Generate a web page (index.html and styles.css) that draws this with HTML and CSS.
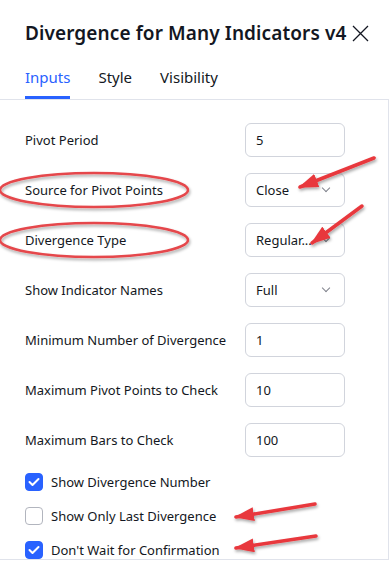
FILE: index.html
```html
<!DOCTYPE html>
<html lang="en">
<head>
    <meta charset="UTF-8" />
    <meta name="viewport" content="width=device-width, initial-scale=1.0"/>
    <title>Divergence for Many Indicators v4</title>
    <link rel="stylesheet" href="styles.css">
</head>
<body>
<div class="dialog">
    <div class="header">
        <div class="title-row">
            <h1>Divergence for Many Indicators v4</h1>
            <svg class="close" width="17" height="17" viewBox="0 0 17 17">
                <path d="M1 1 L16 16 M16 1 L1 16" stroke="#131722" stroke-width="1.3" fill="none"/>
            </svg>
        </div>
        <div class="tabs">
            <div class="tab active">Inputs</div>
            <div class="tab">Style</div>
            <div class="tab">Visibility</div>
        </div>
    </div>

    <div class="content">
        <div class="row">
            <label>Pivot Period</label>
            <div class="field">5</div>
        </div>
        <div class="row">
            <label>Source for Pivot Points</label>
            <div class="field select">Close<span class="chev"></span></div>
        </div>
        <div class="row">
            <label>Divergence Type</label>
            <div class="field select">Regular...<span class="chev"></span></div>
        </div>
        <div class="row">
            <label>Show Indicator Names</label>
            <div class="field select">Full<span class="chev"></span></div>
        </div>
        <div class="row">
            <label>Minimum Number of Divergence</label>
            <div class="field">1</div>
        </div>
        <div class="row">
            <label>Maximum Pivot Points to Check</label>
            <div class="field">10</div>
        </div>
        <div class="row">
            <label>Maximum Bars to Check</label>
            <div class="field">100</div>
        </div>

        <div class="check-list">
            <div class="check-row">
                <span class="box checked"><svg width="12" height="10" viewBox="0 0 12 10"><path d="M1.5 5 L4.5 8 L10.5 2" stroke="#fff" stroke-width="2" fill="none" stroke-linecap="round" stroke-linejoin="round"/></svg></span>
                Show Divergence Number
            </div>
            <div class="check-row">
                <span class="box"></span>
                Show Only Last Divergence
            </div>
            <div class="check-row">
                <span class="box checked"><svg width="12" height="10" viewBox="0 0 12 10"><path d="M1.5 5 L4.5 8 L10.5 2" stroke="#fff" stroke-width="2" fill="none" stroke-linecap="round" stroke-linejoin="round"/></svg></span>
                Don't Wait for Confirmation
            </div>
        </div>
    </div>
</div>

<!-- red annotations drawn over the screenshot -->
<svg class="marks" width="390" height="570" viewBox="0 0 390 570">
    <defs>
        <marker id="head" viewBox="0 0 20 14" refX="18" refY="7" markerWidth="20" markerHeight="14" markerUnits="userSpaceOnUse" orient="auto">
            <path d="M0 0 L20 7 L0 14 z" fill="#e8383d"/>
        </marker>
        <filter id="shade" x="-20%" y="-40%" width="140%" height="180%">
            <feDropShadow dx="1" dy="2" stdDeviation="1.5" flood-color="#000" flood-opacity="0.35"/>
        </filter>
    </defs>
    <g fill="none" stroke="#e5474b" stroke-width="2.5" filter="url(#shade)">
        <ellipse cx="94" cy="190" rx="94" ry="17"/>
        <ellipse cx="94" cy="240" rx="94" ry="17"/>
    </g>
    <g stroke="#e8383d" stroke-width="3.5" stroke-linecap="round" marker-end="url(#head)" filter="url(#shade)">
        <line x1="374" y1="158" x2="300" y2="187"/>
        <line x1="362" y1="206" x2="312" y2="243"/>
        <line x1="315" y1="504" x2="236" y2="517"/>
        <line x1="316" y1="536" x2="236" y2="548"/>
    </g>
</svg>
</body>
</html>
```

FILE: styles.css
```css
body {
    margin: 0;
    padding: 0;
    background: #ffffff;
    font-family: 'Noto Sans', sans-serif;
    color: #131722;
    width: 390px;
    height: 570px;
    overflow: hidden;
    position: relative;
}
.dialog {
    width: 389px;
}
.header {
    padding: 20px 20px 0 25px;
}
.title-row {
    display: flex;
    align-items: center;
    justify-content: space-between;
    height: 26px;
}
h1 {
    margin: 0;
    font-size: 19px;
    font-weight: 600;
    letter-spacing: 0.1px;
    white-space: nowrap;
}
.close {
    display: block;
}
.tabs {
    display: flex;
    gap: 28px;
    margin-top: 21px;
}
.tab {
    font-size: 15px;
    line-height: 20px;
    padding-bottom: 9px;
    border-bottom: 3px solid transparent;
}
.tab.active {
    color: #2962ff;
    border-bottom-color: #2962ff;
}
.content {
    border-top: 1px solid #e0e3eb;
    border-right: 1px solid #e0e3eb;
    border-bottom: 1px solid #e0e3eb;
    height: 461px;
    overflow: hidden;
    padding: 23px 0 0 25px;
    box-sizing: border-box;
}
.row {
    display: grid;
    grid-template-columns: 220px 100px;
    align-items: center;
    height: 34px;
    margin-bottom: 16px;
}
.row label {
    font-size: 13px;
}
.field {
    box-sizing: border-box;
    height: 34px;
    border: 1px solid #d1d4dc;
    border-radius: 6px;
    padding: 0 10px;
    font-size: 13px;
    display: flex;
    align-items: center;
    justify-content: space-between;
}
.chev {
    width: 5px;
    height: 5px;
    border-right: 1px solid #80838d;
    border-bottom: 1px solid #80838d;
    transform: rotate(45deg);
    margin: -4px 5px 0 0;
}
.check-list {
    margin-top: -8px;
}
.check-row {
    display: flex;
    align-items: center;
    gap: 8px;
    height: 34px;
    font-size: 13px;
}
.box {
    box-sizing: border-box;
    width: 18px;
    height: 18px;
    border: 1px solid #b2b5be;
    border-radius: 4px;
    display: flex;
    align-items: center;
    justify-content: center;
}
.box.checked {
    background: #2962ff;
    border-color: #2962ff;
}
.marks {
    position: absolute;
    top: 0;
    left: 0;
    pointer-events: none;
}
```
